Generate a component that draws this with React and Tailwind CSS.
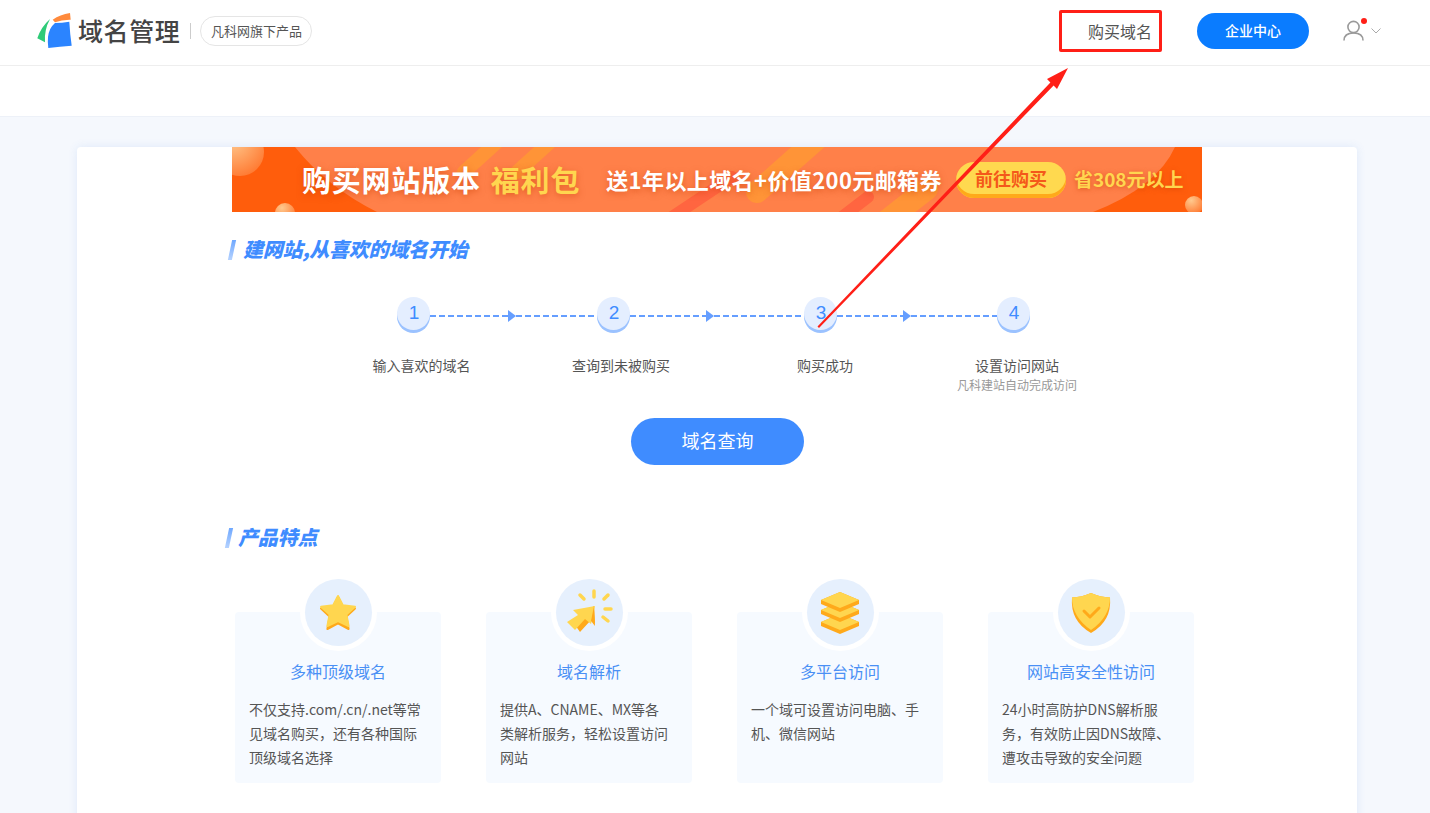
const FONT = "[font-family:'Noto_Sans_CJK_SC','Liberation_Sans',sans-serif]";

const steps = [
  { n: 1, left: 78, right: 81 },
  { n: 2, left: 76, right: 90 },
  { n: 3, left: 66, right: 86 },
  { n: 4 },
];

function Logo() {
  return (
    <svg width="40" height="40" viewBox="0 0 40 40" className="shrink-0">
      <path d="M18 12 Q25 12 32.3 10.7 Q33 23 34.7 34.7 Q23 35.5 11.3 37 Q10.5 31 11 26 Q12 17 18 12Z" fill="#2b84ff" />
      <path d="M15.7 8.7 Q23 3.5 33 2 L33.7 8.7 Q25 8.5 18 11.3Z" fill="#ff8a3c" />
      <path d="M13 8 Q4 16 0.3 27.3 L8 31.3 Q7 19 13 8Z" fill="#2fcb78" />
    </svg>
  );
}

function StarIcon() {
  return (
    <svg width="40" height="40" viewBox="0 0 40 40">
      <path d="M20 4 L24.8 13.8 L37 15.4 L28.4 23.5 L30.6 36 L20 30.4 L9.4 36 L11.6 23.5 L3 15.4 L15.2 13.8Z" fill="#ffa91a" stroke="#ffa91a" strokeWidth="2" strokeLinejoin="round" />
      <path d="M20 3 L24.8 12.3 L37 13.8 L28.4 21.5 L30.6 33 L20 28 L9.4 33 L11.6 21.5 L3 13.8 L15.2 12.3Z" fill="#ffd64f" stroke="#ffd64f" strokeWidth="2" strokeLinejoin="round" />
    </svg>
  );
}

function ClickIcon() {
  return (
    <svg width="50" height="50" viewBox="0 0 50 50">
      <path d="M9 34 L16 29 L30 18 L31 36 L27 32 L16 44Z" fill="#ffa91a" />
      <path d="M30 18 L8 22 L13 27 L2 34 L10 42 L20 31 L26 36Z" fill="#ffd64f" transform="translate(1 0)" />
      <path d="M30 18 L31 38 L27 33Z" fill="#ffa91a" />
      <g stroke="#ffd64f" strokeWidth="3.5" strokeLinecap="round">
        <path d="M30 3 V9" />
        <path d="M16 7 L20 11" />
        <path d="M44 7 L40 11" />
        <path d="M41 21 H47" />
        <path d="M39 29 L44 33" />
      </g>
    </svg>
  );
}

function LayersIcon() {
  return (
    <svg width="42" height="46" viewBox="0 0 42 46">
      <path d="M2 32 L21 24 L40 32 V36 L21 44 L2 36Z" fill="#ffa91a" />
      <path d="M2 32 L21 24 L40 32 L21 40Z" fill="#ffd64f" />
      <path d="M2 20 L21 12 L40 20 V24 L21 32 L2 24Z" fill="#ffa91a" />
      <path d="M2 20 L21 12 L40 20 L21 28Z" fill="#ffd64f" />
      <path d="M2 10 L21 2 L40 10 V14 L21 22 L2 14Z" fill="#ffa91a" />
      <path d="M2 10 L21 2 L40 10 L21 18Z" fill="#ffd64f" />
    </svg>
  );
}

function ShieldIcon() {
  return (
    <svg width="42" height="44" viewBox="0 0 42 44">
      <path d="M21 2 Q30 6 40 6.5 Q42 30 21 42 Q0 30 2 6.5 Q12 6 21 2Z" fill="#ffa91a" />
      <path d="M21 2 Q30 6 40 6.5 Q40 26 21 39 Q2 26 2 6.5 Q12 6 21 2Z" fill="#ffd64f" />
      <path d="M14 20 L20 26 L29 17" fill="none" stroke="#ffa91a" strokeWidth="3" strokeLinecap="round" strokeLinejoin="round" />
    </svg>
  );
}

const features = [
  { icon: <StarIcon />, title: '多种顶级域名', lines: ['不仅支持.com/.cn/.net等常', '见域名购买，还有各种国际', '顶级域名选择'] },
  { icon: <ClickIcon />, title: '域名解析', lines: ['提供A、CNAME、MX等各', '类解析服务，轻松设置访问', '网站'] },
  { icon: <LayersIcon />, title: '多平台访问', lines: ['一个域可设置访问电脑、手', '机、微信网站'] },
  { icon: <ShieldIcon />, title: '网站高安全性访问', lines: ['24小时高防护DNS解析服', '务，有效防止因DNS故障、', '遭攻击导致的安全问题'] },
];

function Dashes({ width }) {
  return (
    <div
      className="h-[2px] bg-[repeating-linear-gradient(90deg,#659eff_0_6px,transparent_6px_9px)]"
      style={{ width }}
    />
  );
}

function SectionTitle({ children, className }) {
  return (
    <div className={`flex items-center h-[20px] ${className}`}>
      <span className="w-[4px] h-[20px] -skew-x-12 bg-gradient-to-b from-[#6fa8ff] to-[#b5d2ff]" />
      <h2 className="-mt-[2px] text-[20px] leading-[20px] font-black italic tracking-[-0.2px] text-[#3f8cff]">{children}</h2>
    </div>
  );
}

function Banner() {
  return (
    <div className="relative h-[65px] overflow-hidden bg-[#ff5d0c]">
      <svg className="absolute inset-0" width="970" height="65" viewBox="0 0 970 65">
        <path d="M63 0 Q95 40 145 65 H861 Q925 40 943 0Z" fill="#ff8049" />
        <g strokeLinecap="round" strokeWidth="22" fill="none">
          <path d="M232 25 L265 -5" stroke="#ff9437" strokeWidth="14" />
          <path d="M285 25 L318 -5" stroke="#ff9437" strokeWidth="14" />
          <path d="M525 45 L585 -8" stroke="#ff9437" />
          <path d="M640 85 L695 42" stroke="#ff9437" />
        </g>
        <path d="M440 70 L500 30" stroke="#ff6540" strokeWidth="12" strokeLinecap="round" />
        <path d="M610 70 L636 50" stroke="#ff6540" strokeWidth="12" strokeLinecap="round" />
        <defs>
          <radialGradient id="ball" cx="35%" cy="25%" r="80%">
            <stop offset="0%" stopColor="#ffc98e" />
            <stop offset="100%" stopColor="#ff7a32" />
          </radialGradient>
        </defs>
        <circle cx="8" cy="5" r="24" fill="url(#ball)" />
        <circle cx="53" cy="66" r="10" fill="url(#ball)" />
        <circle cx="962" cy="58" r="9" fill="url(#ball)" />
      </svg>
      <div className="relative flex h-full items-center pl-[70px] whitespace-nowrap">
        <span className="text-[29px] font-bold text-white tracking-[0.8px] [text-shadow:0_2px_6px_rgba(200,60,0,.5)]">购买网站版本</span>
        <span className="ml-[10px] text-[29px] font-bold text-[#ffd64f] tracking-[0.8px] [text-shadow:0_2px_6px_rgba(200,60,0,.5)]">福利包</span>
        <span className="ml-[26px] text-[22px] font-bold tracking-[0.4px] text-white [text-shadow:0_2px_6px_rgba(200,60,0,.5)]">送1年以上域名+价值200元邮箱券</span>
        <span className="ml-[14px] flex h-[36px] w-[110px] items-center justify-center rounded-[18px] bg-[#ffd94f] pb-[3px] text-[18px] font-bold text-[#f4581a] shadow-[inset_0_-4px_0_#ffa91a]">前往购买</span>
        <span className="ml-[8px] text-[19px] font-bold text-[#ffd64f] [text-shadow:0_1px_5px_rgba(200,60,0,.6)]">省308元以上</span>
      </div>
    </div>
  );
}

function Steps() {
  return (
    <div className="mt-[37px] ml-[165px] flex items-start">
      {steps.map((s) => (
        <div key={s.n} className="flex items-start">
          <div className="flex h-[33px] w-[33px] items-center justify-center rounded-full bg-[#e4eeff] pl-[1px] text-[19px] text-[#3f8cff] shadow-[0_3px_0_#9bc2ff] [font-family:'Liberation_Sans',sans-serif]">
            {s.n}
          </div>
          {s.left && (
            <div className="mt-[13px] flex items-center">
              <Dashes width={s.left} />
              <span className="h-0 w-0 border-y-[6px] border-l-[8px] border-y-transparent border-l-[#659eff]" />
              <Dashes width={s.right} />
            </div>
          )}
        </div>
      ))}
    </div>
  );
}

function FeatureCard({ icon, title, lines }) {
  return (
    <div className="flex h-[171px] w-[206px] flex-col items-center rounded-[4px] bg-[#f6faff] px-[14px]">
      <div className="-mt-[38px] flex h-[77px] w-[77px] shrink-0 items-center justify-center rounded-full bg-white">
        <div className="flex h-[67px] w-[67px] items-center justify-center rounded-full bg-[#e6f0fd]">{icon}</div>
      </div>
      <div className="mt-[8px] text-[16px] leading-[24px] text-[#4a90f5]">{title}</div>
      <div className="mt-[14px] w-full text-[14px] leading-[24px] text-[#555]">
        {lines.map((l) => (
          <div key={l} className="whitespace-nowrap">{l}</div>
        ))}
      </div>
    </div>
  );
}

export default function App() {
  return (
    <div className={`relative h-[813px] overflow-hidden bg-[#f5f8fd] ${FONT}`}>
      {/* Top bar */}
      <header className="flex h-[66px] items-center border-b border-[#eeeeee] bg-white pb-[4px] pl-[37px] pr-[49px]">
        <Logo />
        <span className="ml-[1px] text-[25px] font-medium leading-none tracking-[0.6px] text-[#444]">域名管理</span>
        <span className="ml-[10px] h-[16px] w-px bg-[#cccccc]" />
        <span className="ml-[9px] flex h-[30px] w-[112px] items-center justify-center rounded-full border border-[#e5e5e5] text-[13px] text-[#555]">凡科网旗下产品</span>
        <div className="ml-auto flex items-center">
          <div className="flex h-[42px] w-[103px] items-center justify-end rounded-[2px] border-[3px] border-[#ff1f17] pr-[7px] text-[16px] text-[#555]">购买域名</div>
          <button className="ml-[35px] h-[36px] w-[112px] rounded-full bg-[#0a7cff] text-[14px] font-medium text-white">企业中心</button>
          <div className="relative ml-[34px] flex items-center">
            <svg width="21" height="21" viewBox="0 0 21 21" fill="none" stroke="#9a9a9a" strokeWidth="1.6">
              <circle cx="10.5" cy="7" r="5.6" />
              <path d="M1 20.5 C1 15.5 5 13 10.5 13 C16 13 20 15.5 20 20.5" />
            </svg>
            <span className="absolute -top-[2px] left-[18px] h-[6px] w-[6px] rounded-full bg-[#ff1f17]" />
            <svg className="ml-[7px]" width="10" height="6" viewBox="0 0 10 6" fill="none" stroke="#aaaaaa">
              <path d="M0.5 0.5 L5 5 L9.5 0.5" />
            </svg>
          </div>
        </div>
      </header>
      <div className="h-[51px] border-b border-[#edf1f8] bg-white" />

      {/* Main card */}
      <main className="ml-[77px] mt-[30px] w-[1280px] h-[800px] rounded-[4px] bg-white shadow-[0_0_10px_rgba(60,120,220,.12)]">
        <div className="mx-auto w-[970px]">
          <Banner />
          <SectionTitle className="mt-[28px] -ml-[2px] gap-[9px]">建网站,从喜欢的域名开始</SectionTitle>
          <Steps />

          <div className="mt-[25px] flex text-center text-[14px] leading-[20px] text-[#555]">
            <div className="ml-[109.5px] w-[160px]">输入喜欢的域名</div>
            <div className="ml-[39.5px] w-[160px]">查询到未被购买</div>
            <div className="ml-[44px] w-[160px]">购买成功</div>
            <div className="ml-[32px] w-[160px]">
              设置访问网站
              <div className="text-[12px] text-[#999]">凡科建站自动完成访问</div>
            </div>
          </div>

          <button className="mt-[23px] ml-[399px] block h-[47px] w-[173px] rounded-full bg-[#3f8cff] pb-[2px] text-[18px] text-white">域名查询</button>

          <SectionTitle className="mt-[63px] -ml-[5px] gap-[7px]">产品特点</SectionTitle>

          <div className="mt-[64px] ml-[3px] flex gap-[45px]">
            {features.map((f) => (
              <FeatureCard key={f.title} {...f} />
            ))}
          </div>
        </div>
      </main>

      {/* Red annotation arrow */}
      <svg className="pointer-events-none absolute inset-0" width="1430" height="813" viewBox="0 0 1430 813">
        <polygon points="817.5,326.5 819,328 1053.6,85.5 1057,89 1068,68 1047,79 1050.4,82.5" fill="#ff1f17" />
      </svg>
    </div>
  );
}
